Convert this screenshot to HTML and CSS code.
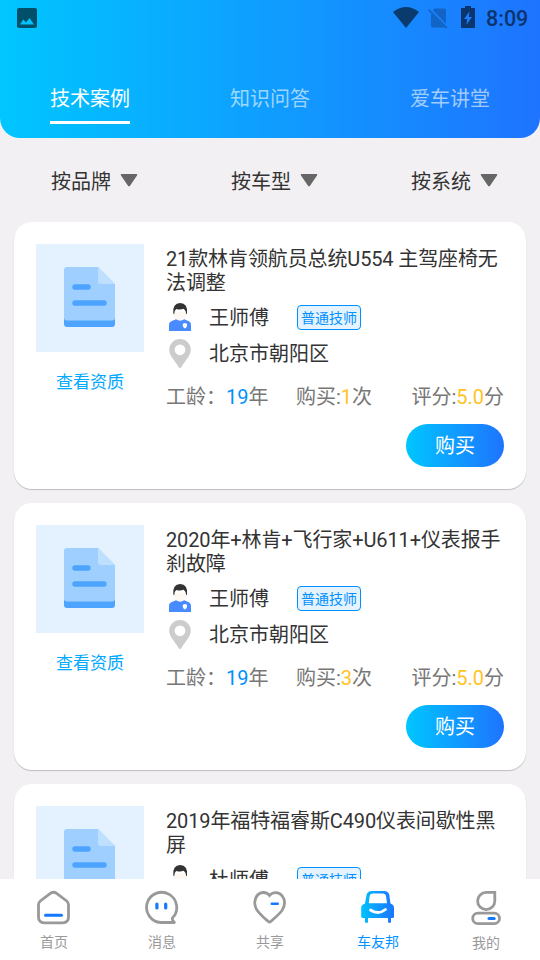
FILE: index.html
```html
<!DOCTYPE html>
<html lang="zh-CN">
<head>
<meta charset="utf-8">
<title>车友邦</title>
<link rel="stylesheet" href="styles.css">
</head>
<body>
<svg class="defs" width="0" height="0" aria-hidden="true">
  <defs>
    <linearGradient id="brand" x1="0" y1="0" x2="1" y2="0"><stop offset="0" stop-color="#00c2ff"/><stop offset="1" stop-color="#1e74ff"/></linearGradient>
    <symbol id="doc" viewBox="0 0 108 108">
      <path d="M28 74h51v6q0 3-3 3H31q-3 0-3-3z" fill="#4ca4ff"/>
      <path d="M31 23H62L79 40V73.500q0 3-3 3H31q-3 0-3-3V26q0-3 3-3z" fill="#9fcfff"/>
      <path d="M62 23L79 40H65q-3 0-3-3z" fill="#bfdfff"/>
      <path d="M39 43H52M39 59H68" stroke="#4ca4ff" stroke-width="5.400" stroke-linecap="round"/>
    </symbol>
    <symbol id="person" viewBox="0 0 22 28">
      <path d="M5 8.500h12.400v4.500q-.5 3-3 4.200v2.300l-3.200 2-3.400-2v-2.300Q5.300 16 5 13z" fill="#fdf9f2"/>
      <path d="M4.300 10.500Q3.400 0 11.200 0t6.800 10.500l-.8.800q-.2-4-2.500-5.500-3.500 1.500-7.500.2-2 1.500-2 5.300z" fill="#333"/>
      <path d="M0 28v-6q0-3.300 3.500-4.300l3.500-1.400q4.200 2.700 8.300 0l3.400 1.400Q22 18.700 22 22v6z" fill="#488bff"/>
      <path d="M13.800 20.700l2.100-.6 2.100.6v2.400q-.5 1.800-2.100 2.300-1.600-.5-2.100-2.300z" fill="#fff"/>
    </symbol>
    <symbol id="pin" viewBox="0 0 22 29">
      <path fill="#ccc" fill-rule="evenodd" d="M11 0A10.800 10.800 0 0 1 21.800 10.800C21.800 17 16 21.500 12.500 28q-1.500 2-3 0C6 21.500.2 17 .2 10.800A10.800 10.800 0 0 1 11 0zM11 5.400A5.400 5.400 0 1 0 11 16.200 5.400 5.400 0 1 0 11 5.400z"/>
    </symbol>
  </defs>
</svg>
<div class="screen">
  <header class="header">
    <div class="status">
      <svg class="status-image" width="20" height="20" viewBox="0 0 20 20"><path fill="#005069" fill-rule="evenodd" d="M2 0h16q2 0 2 2v16q0 2-2 2H2q-2 0-2-2V2q0-2 2-2zM3 16.500h14L12.500 10 9 14.500 6.300 11.500z"/></svg>
      <div class="status-right">
        <svg class="wifi" width="26" height="21" viewBox="0 0 26 21"><path fill="#0a3b6e" d="M0 5Q13-5 26 5L13 21z"/></svg>
        <svg class="sim" width="20" height="22" viewBox="0 0 20 22"><path fill="#1365c5" d="M6.500 1.500H16.500q1.500 0 1.500 1.500v14L5 3.200zM3 5.700L17 20.500H4.500Q3 20.500 3 19z"/><path d="M.8 2.800L18.800 21" stroke="#1365c5" stroke-width="1.800"/></svg>
        <svg class="battery" width="14" height="22" viewBox="0 0 14 22"><path fill="#0a356d" d="M4 0h6v2h4v20H0V2h4z"/><path fill="#1b7dff" d="M8.500 5.500L3 13h3.300L5.300 19l5.700-8H7.800z"/></svg>
        <span class="clock">8:09</span>
      </div>
    </div>
    <nav class="tabs">
      <div class="tab"><span class="tab-label active">技术案例</span></div>
      <div class="tab"><span class="tab-label">知识问答</span></div>
      <div class="tab"><span class="tab-label">爱车讲堂</span></div>
    </nav>
  </header>
  <div class="filters">
    <div class="filter">按品牌<svg width="18" height="13" viewBox="0 0 18 13"><path d="M1.200 0h15.600q1 .5.200 1.500L10 11.800q-1 1-2 0L1 1.500Q.2.500 1.200 0z" fill="#666"/></svg></div>
    <div class="filter">按车型<svg width="18" height="13" viewBox="0 0 18 13"><path d="M1.200 0h15.600q1 .5.200 1.500L10 11.800q-1 1-2 0L1 1.500Q.2.500 1.200 0z" fill="#666"/></svg></div>
    <div class="filter">按系统<svg width="18" height="13" viewBox="0 0 18 13"><path d="M1.200 0h15.600q1 .5.200 1.500L10 11.800q-1 1-2 0L1 1.500Q.2.500 1.200 0z" fill="#666"/></svg></div>
  </div>
  <main class="list">
    <article class="card">
      <div class="side"><svg class="thumb"><use href="#doc"/></svg><span class="link">查看资质</span></div>
      <div class="body">
        <h2 class="title">21款林肯领航员总统U554 主驾座椅无法调整</h2>
        <div class="row"><svg class="person"><use href="#person"/></svg><span class="name">王师傅</span><span class="badge">普通技师</span></div>
        <div class="row"><svg class="pin"><use href="#pin"/></svg><span>北京市朝阳区</span></div>
        <div class="stats"><span class="age">工龄：<b class="blue">19</b>年</span><span>购买:<b class="gold">1</b>次</span><span class="score">评分:<b class="gold">5.0</b>分</span></div>
        <div class="buy">购买</div>
      </div>
    </article>
    <article class="card">
      <div class="side"><svg class="thumb"><use href="#doc"/></svg><span class="link">查看资质</span></div>
      <div class="body">
        <h2 class="title">2020年+林肯+飞行家+U611+仪表报手刹故障</h2>
        <div class="row"><svg class="person"><use href="#person"/></svg><span class="name">王师傅</span><span class="badge">普通技师</span></div>
        <div class="row"><svg class="pin"><use href="#pin"/></svg><span>北京市朝阳区</span></div>
        <div class="stats"><span class="age">工龄：<b class="blue">19</b>年</span><span>购买:<b class="gold">3</b>次</span><span class="score">评分:<b class="gold">5.0</b>分</span></div>
        <div class="buy">购买</div>
      </div>
    </article>
    <article class="card">
      <div class="side"><svg class="thumb"><use href="#doc"/></svg></div>
      <div class="body">
        <h2 class="title">2019年福特福睿斯C490仪表间歇性黑屏</h2>
        <div class="row"><svg class="person"><use href="#person"/></svg><span class="name">杜师傅</span><span class="badge">普通技师</span></div>
      </div>
    </article>
  </main>
  <nav class="bottom">
    <div class="item">
      <svg width="36" height="36" viewBox="0.5 0 36 36" fill="none"><path d="M15.200 3.200q2.800-2 5.600 0L31.200 11q1.800 1.500 1.800 3.800V27q0 5.800-5.800 5.800H8.800Q3 32.800 3 27V14.800Q3 12.500 4.800 11z" stroke="#999" stroke-width="2.800"/><path d="M10 25.300H26" stroke="#1677ff" stroke-width="3" stroke-linecap="round"/></svg>
      <span>首页</span>
    </div>
    <div class="item">
      <svg width="36" height="36" viewBox="0.7 0 36 36" fill="none"><path d="M31 32.500H17.500A15.100 15.100 0 1 1 29.300 27.800Q28.200 29.300 31 32.500z" stroke="#999" stroke-width="2.800" stroke-linejoin="round"/><path d="M13.600 14v4M22.400 14v4" stroke="#1677ff" stroke-width="3.200" stroke-linecap="round"/></svg>
      <span>消息</span>
    </div>
    <div class="item">
      <svg width="36" height="36" viewBox="0 0 36 36" fill="none"><path d="M17.500 5.500C14.500 1.500 8.500 1.500 5.200 5.500 1.500 10 2.300 16.500 5.300 20.500 9 25.500 13.500 29 16.300 31.500q1.200 1 2.400 0C21.500 29 26.500 25 30 20.500 33.200 16 33.500 10 30.200 5.800 27 1.500 20.500 1.500 17.500 5.500z" stroke="#999" stroke-width="2.800"/><path d="M19.800 13.800H25.700" stroke="#1677ff" stroke-width="2.600" stroke-linecap="round"/></svg>
      <span>共享</span>
    </div>
    <div class="item current">
      <svg width="36" height="36" viewBox="0 0 36 36" fill="none"><path fill="url(#brand)" fill-rule="evenodd" d="M12 1H24q4.500 0 5.300 4L30.500 13.500Q34 14.500 34 18V26.500q0 1.500-1.500 1.500H31v3.500q0 1.500-1.500 1.500T28 31.500V28H8v3.500q0 1.500-1.500 1.500T5 31.500V28H3Q1.200 28 1.200 26.500V18Q1.200 14.500 5 13.500L6.500 5Q7.500 1 12 1zM12.500 3.500Q10 3.500 9.600 6L8.800 13.200H27L26 6Q25.600 3.500 23.200 3.500z"/><path d="M10.500 20Q18 25.300 25.500 19.500" stroke="#fff" stroke-width="2.800" stroke-linecap="round"/></svg>
      <span>车友邦</span>
    </div>
    <div class="item me">
      <svg width="36" height="36" viewBox="0 0 36 36" fill="none"><path d="M26.800 2.400V11A8.600 8.600 0 1 1 18.200 2.400z" stroke="#999" stroke-width="2.800"/><rect x="4.700" y="23.200" width="26.800" height="10.400" rx="5.200" stroke="#999" stroke-width="2.800"/><path d="M21 28.600h5.200" stroke="#1677ff" stroke-width="3" stroke-linecap="round"/></svg>
      <span>我的</span>
    </div>
  </nav>
</div>
</body>
</html>
```
FILE: styles.css
```css
* { box-sizing: border-box; }
body { margin: 0; font-family: Roboto, "Noto Sans CJK SC", sans-serif; font-size: 20px; line-height: 24px; color: #333; background: #f2f0f3; }
svg { display: block; flex: none; }
.defs { position: absolute; }
.screen { width: 540px; height: 960px; display: flex; flex-direction: column; overflow: hidden; }
.header { flex: none; height: 138px; border-radius: 0 0 20px 20px; background: linear-gradient(90deg, #00c6ff, #1e74ff); }
.status { height: 36px; padding: 0 12px 0 17px; display: flex; justify-content: space-between; align-items: center; }
.status-right { display: flex; align-items: center; }
.wifi { margin-top: -2px; }
.sim { margin-left: 9px; }
.battery { margin: -2px 0 0 13px; }
.clock { margin: 2px 0 0 11px; font-size: 21.500px; font-weight: 500; color: #0b346d; width: 42px; white-space: nowrap; }
.tabs { display: grid; grid-template-columns: repeat(3, 180px); padding-top: 51px; }
.tab { display: flex; justify-content: center; }
.tab-label { height: 37px; border-bottom: 3px solid transparent; color: rgba(255, 255, 255, .6); }
.tab-label.active { color: #fff; border-color: #fff; }
.filters { flex: none; height: 84px; display: grid; grid-template-columns: repeat(3, 180px); align-items: center; padding-top: 4px; }
.filter { display: flex; align-items: center; gap: 8.500px; padding-left: 51px; }
.filter svg { margin-top: -4px; }
.list { flex: 1; min-height: 0; overflow: hidden; padding: 0 14px; display: flex; flex-direction: column; gap: 14px; }
.card { flex: none; height: 267px; padding: 22px; display: flex; gap: 22px; background: #fff; border-radius: 18px; box-shadow: 0 1px 1px rgba(0, 0, 0, .22); }
.side { width: 108px; display: flex; flex-direction: column; align-items: center; gap: 18px; }
.thumb { width: 108px; height: 108px; background: #e4f2ff; }
.link { font-size: 17px; color: #00a8ff; }
.body { width: 338px; display: flex; flex-direction: column; padding-top: 3px; }
.title { margin: 0 0 5px; font-size: 20px; font-weight: 400; line-height: 24px; width: 340px; letter-spacing: -.12px; }
.row { height: 36px; display: flex; align-items: center; padding-left: 3px; }
.person { width: 22px; height: 28px; margin: -2px 18px 0 0; }
.pin { width: 22px; height: 29px; margin: -2px 18px 0 0; }
.name { width: 88px; }
.badge { width: 64px; height: 25px; margin-top: -1px; border: 1px solid #0090ff; border-radius: 4px; background: #e5f3ff; color: #0090ff; font-size: 14px; line-height: 24px; text-align: center; }
.stats { margin-top: 13px; display: flex; color: #777; white-space: nowrap; }
.age { width: 130px; }
.stats b { font-weight: 400; }
.blue { color: #0090ff; }
.gold { color: #ffc31e; }
.score { margin-left: auto; }
.buy { align-self: flex-end; margin-top: 15px; width: 98px; height: 43px; border-radius: 22px; background: linear-gradient(90deg, #00c6ff, #1e74ff); color: #fff; line-height: 45px; text-align: center; }
.bottom { flex: none; height: 81px; display: grid; grid-template-columns: repeat(5, 108px); background: #fff; padding-top: 11px; }
.item { display: flex; flex-direction: column; align-items: center; gap: 6px; font-size: 14px; line-height: 20px; color: #999; }
.item.me { gap: 7px; }
.item.current { color: #0090ff; }
```
